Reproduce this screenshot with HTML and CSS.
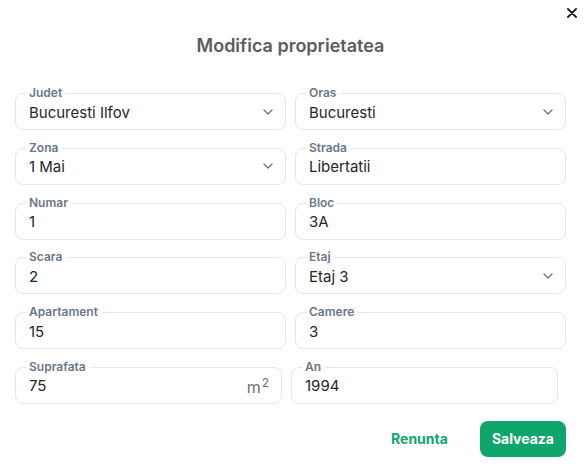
FILE: index.html
```html
<!DOCTYPE html>
<html lang="ro">
<head>
<meta charset="utf-8">
<title>Modifica proprietatea</title>
<link rel="stylesheet" href="styles.css">
</head>
<body>
<div class="dialog">
  <button class="close" aria-label="Inchide">
    <svg width="10" height="10" viewBox="0 0 10 10"><path d="M1 1L9 9M9 1L1 9" stroke="#1f1f1f" stroke-width="1.8" stroke-linecap="round"/></svg>
  </button>
  <h1 class="title">Modifica proprietatea</h1>
  <div class="form">
    <div class="row">
      <div class="field"><span class="label">Judet</span><span class="value">Bucuresti Ilfov</span><svg class="chev" width="10" height="6" viewBox="0 0 10 6"><path d="M1 1L5 5L9 1" fill="none" stroke="#6b7280" stroke-width="1.3" stroke-linecap="round" stroke-linejoin="round"/></svg></div>
      <div class="field"><span class="label">Oras</span><span class="value">Bucuresti</span><svg class="chev" width="10" height="6" viewBox="0 0 10 6"><path d="M1 1L5 5L9 1" fill="none" stroke="#6b7280" stroke-width="1.3" stroke-linecap="round" stroke-linejoin="round"/></svg></div>
    </div>
    <div class="row">
      <div class="field"><span class="label">Zona</span><span class="value">1 Mai</span><svg class="chev" width="10" height="6" viewBox="0 0 10 6"><path d="M1 1L5 5L9 1" fill="none" stroke="#6b7280" stroke-width="1.3" stroke-linecap="round" stroke-linejoin="round"/></svg></div>
      <div class="field"><span class="label">Strada</span><span class="value">Libertatii</span></div>
    </div>
    <div class="row">
      <div class="field"><span class="label">Numar</span><span class="value">1</span></div>
      <div class="field"><span class="label">Bloc</span><span class="value">3A</span></div>
    </div>
    <div class="row">
      <div class="field"><span class="label">Scara</span><span class="value">2</span></div>
      <div class="field"><span class="label">Etaj</span><span class="value">Etaj 3</span><svg class="chev" width="10" height="6" viewBox="0 0 10 6"><path d="M1 1L5 5L9 1" fill="none" stroke="#6b7280" stroke-width="1.3" stroke-linecap="round" stroke-linejoin="round"/></svg></div>
    </div>
    <div class="row">
      <div class="field"><span class="label">Apartament</span><span class="value">15</span></div>
      <div class="field"><span class="label">Camere</span><span class="value">3</span></div>
    </div>
    <div class="row row-last">
      <div class="field"><span class="label">Suprafata</span><span class="value">75</span><span class="unit">m<sup>2</sup></span></div>
      <div class="field"><span class="label">An</span><span class="value">1994</span></div>
    </div>
  </div>
  <div class="footer">
    <button class="btn btn-text">Renunta</button>
    <button class="btn btn-primary">Salveaza</button>
  </div>
</div>
</body>
</html>
```
FILE: styles.css
```css
* { box-sizing: border-box; }
html, body { margin: 0; background: #fff; }
body {
  font-family: Inter, "Noto Sans", sans-serif;
  color: #262626;
}
.dialog {
  position: relative;
  width: 584px;
  height: 466px;
  padding: 34px 18px 0 15px;
}
.close {
  position: absolute;
  top: 8px;
  right: 7px;
  width: 10px;
  height: 10px;
  padding: 0;
  border: 0;
  background: none;
  display: flex;
}
.title {
  margin: 0;
  font-size: 18px;
  line-height: 24px;
  font-weight: 600;
  color: #5c5c5c;
  text-align: center;
}
.form {
  margin-top: 35px;
  display: flex;
  flex-direction: column;
  gap: 17.8px;
}
.row {
  display: grid;
  grid-template-columns: 1fr 1fr;
  column-gap: 9px;
}
.row-last { margin-right: 8px; }
.field {
  position: relative;
  height: 37px;
  border: 1px solid #e4e6ea;
  border-radius: 8px;
  padding: 0 12px 0 13px;
  display: flex;
  align-items: center;
}
.label {
  position: absolute;
  left: 10px;
  top: -8px;
  padding: 0 4px 0 3px;
  background: #fff;
  font-size: 12px;
  line-height: 14px;
  font-weight: 600;
  color: #6b7787;
}
.value {
  flex: 1;
  font-size: 15px;
  line-height: 20px;
  color: #262626;
  padding-top: 2px;
}
.chev { flex: none; }
.unit {
  font-size: 16px;
  color: #6b7280;
  line-height: 20px;
}
.unit sup {
  font-size: 12px;
  vertical-align: 6px;
  margin-left: 1px;
}
.footer {
  margin-top: 17px;
  display: flex;
  justify-content: flex-end;
  gap: 16px;
}
.btn {
  height: 36px;
  border: 0;
  border-radius: 8px;
  font-family: inherit;
  font-size: 14px;
  font-weight: 700;
  padding: 0 12px;
  cursor: pointer;
}
.btn-text {
  background: none;
  color: #10a56c;
  padding: 0 16px;
}
.btn-primary {
  background: #10a56c;
  color: #fff;
}
```
